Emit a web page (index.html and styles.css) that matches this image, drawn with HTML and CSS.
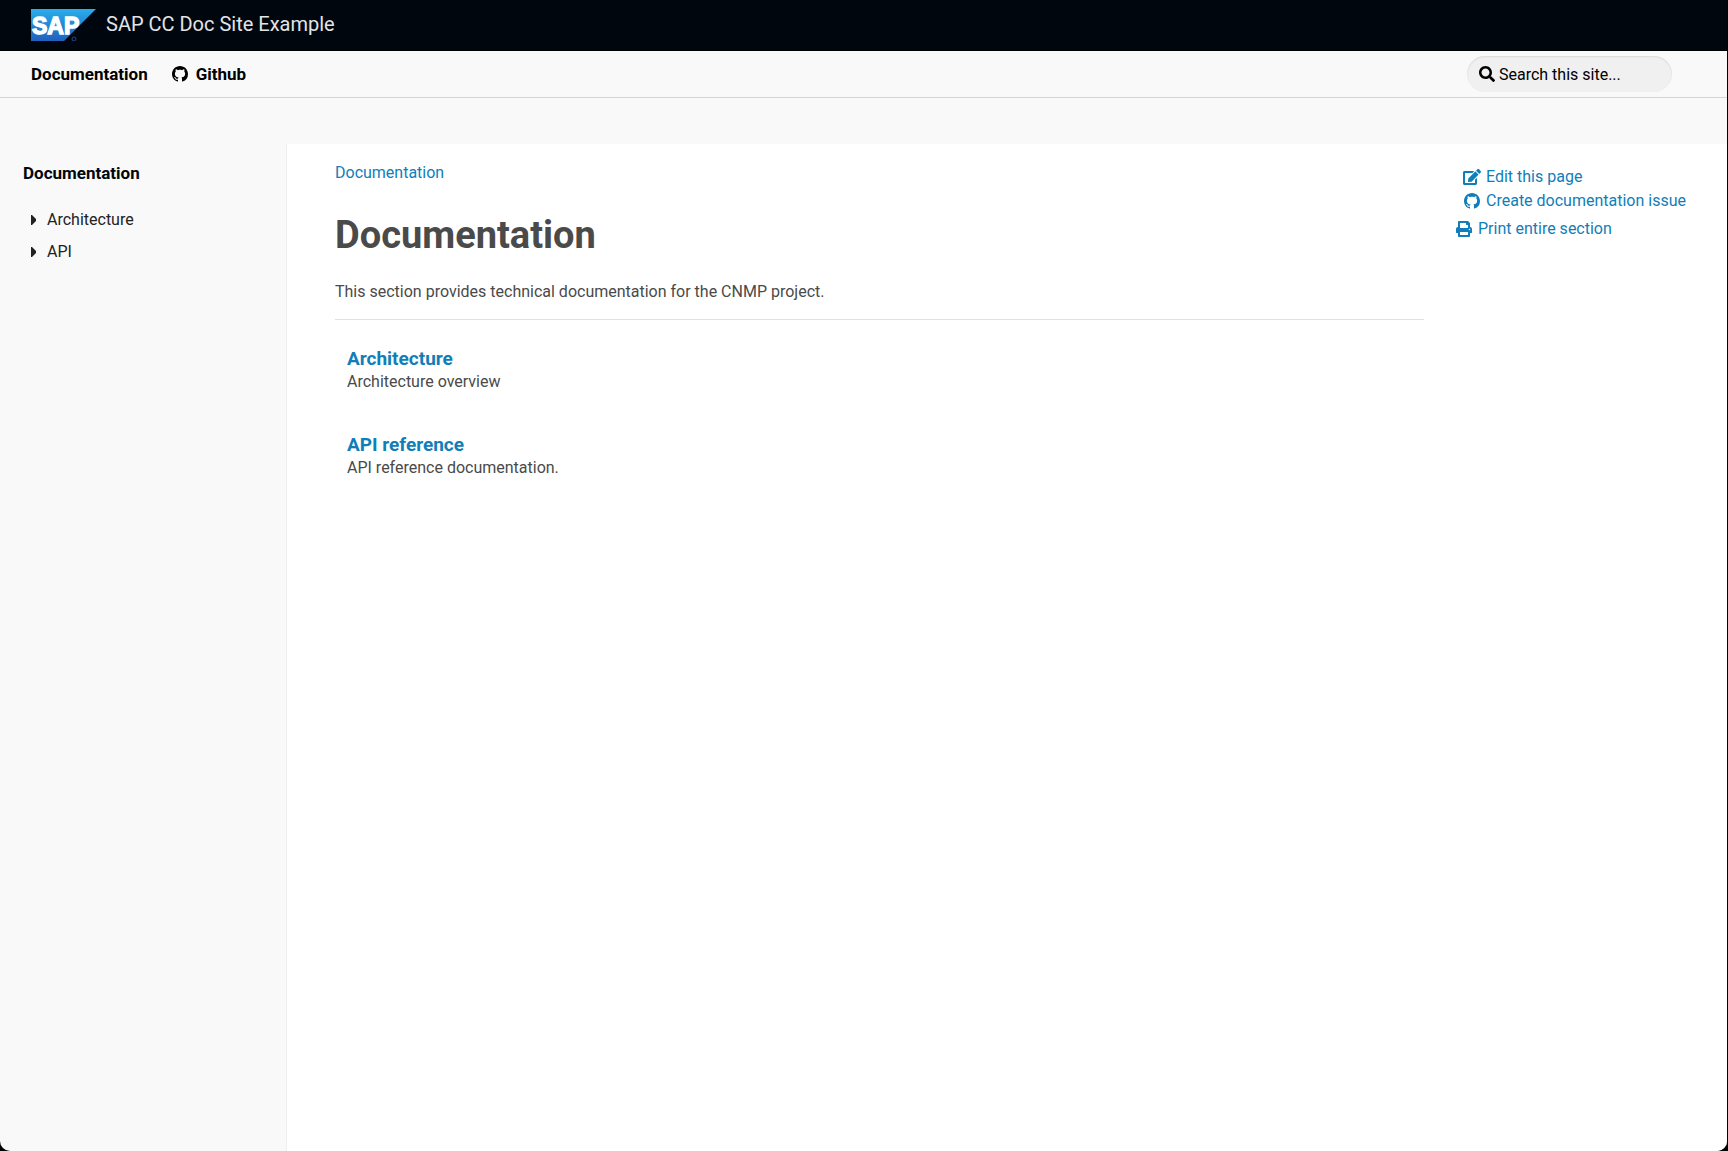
FILE: index.html
```html
<!DOCTYPE html>
<html lang="en">
<head>
<meta charset="utf-8">
<meta name="viewport" content="width=device-width, initial-scale=1">
<title>Documentation | SAP CC Doc Site Example</title>
<link rel="stylesheet" href="styles.css">
</head>
<body>
<svg class="sprite" aria-hidden="true">
  <symbol id="github" viewBox="0 0 16 16"><path d="M8 0C3.58 0 0 3.58 0 8c0 3.54 2.29 6.53 5.47 7.59.4.07.55-.17.55-.38 0-.19-.01-.82-.01-1.49-2.01.37-2.53-.49-2.69-.94-.09-.23-.48-.94-.82-1.13-.28-.15-.68-.52-.01-.53.63-.01 1.08.58 1.23.82.72 1.21 1.87.87 2.33.66.07-.52.28-.87.51-1.07-1.78-.2-3.64-.89-3.64-3.95 0-.87.31-1.59.82-2.15-.08-.2-.36-1.02.08-2.12 0 0 .67-.21 2.2.82.64-.18 1.32-.27 2-.27s1.36.09 2 .27c1.53-1.04 2.2-.82 2.2-.82.44 1.1.16 1.92.08 2.12.51.56.82 1.27.82 2.15 0 3.07-1.87 3.75-3.65 3.95.29.25.54.73.54 1.48 0 1.07-.01 1.93-.01 2.2 0 .21.15.46.55.38A8.01 8.01 0 0 0 16 8c0-4.42-3.58-8-8-8z"/></symbol>
</svg>
<div class="site">
  <header class="masthead">
    <a class="brand" href="#">
      <svg class="logo" viewBox="0 0 66 32" role="img" aria-label="SAP">
        <defs><linearGradient id="sky" x1="0" y1="0" x2="0" y2="1"><stop offset="0" stop-color="#2aaeec"/><stop offset="1" stop-color="#2060bd"/></linearGradient></defs>
        <path d="M0 0H65L33 32H0z" fill="url(#sky)"/>
        <text class="logo-text" x="1" y="25">SAP</text>
        <circle cx="43" cy="30" r="2" fill="none" stroke="#1c4a90"/>
      </svg>
      <span>SAP CC Doc Site Example</span>
    </a>
  </header>
  <nav class="topnav" aria-label="Main">
    <a href="#">Documentation</a>
    <a href="#"><svg class="icon"><use href="#github"/></svg>Github</a>
    <label class="search">
      <svg class="icon" viewBox="0 0 512 512" aria-hidden="true"><path d="M505 442.7L405.3 343c-4.5-4.5-10.6-7-17-7H372c27.6-35.3 44-79.7 44-128C416 93.1 322.9 0 208 0S0 93.1 0 208s93.1 208 208 208c48.3 0 92.7-16.4 128-44v16.3c0 6.4 2.5 12.5 7 17l99.7 99.7c9.4 9.4 24.6 9.4 33.9 0l28.3-28.3c9.4-9.4 9.4-24.6.1-34zM208 336c-70.7 0-128-57.2-128-128 0-70.7 57.2-128 128-128 70.7 0 128 57.2 128 128 0 70.7-57.2 128-128 128z"/></svg>
      <input type="search" placeholder="Search this site..." aria-label="Search this site">
    </label>
  </nav>
  <div class="columns">
    <nav class="sidebar" aria-label="Section">
      <a class="sidebar-title" href="#">Documentation</a>
      <ul class="tree">
        <li><a href="#"><svg class="caret" viewBox="0 0 5 10" aria-hidden="true"><path d="M0 0H1L5 4V6L1 10H0z"/></svg>Architecture</a></li>
        <li><a href="#"><svg class="caret" viewBox="0 0 5 10" aria-hidden="true"><path d="M0 0H1L5 4V6L1 10H0z"/></svg>API</a></li>
      </ul>
    </nav>
    <div class="page">
      <main class="content">
        <a class="crumb" href="#">Documentation</a>
        <h1>Documentation</h1>
        <p class="lead">This section provides technical documentation for the CNMP project.</p>
        <section class="entry"><h2><a href="#">Architecture</a></h2><p>Architecture overview</p></section>
        <section class="entry"><h2><a href="#">API reference</a></h2><p>API reference documentation.</p></section>
      </main>
      <aside class="meta">
        <div class="meta-group">
          <a href="#"><svg class="icon icon-wide" viewBox="0 0 576 512" aria-hidden="true"><path d="M402.6 83.2l90.2 90.2c3.8 3.8 3.8 10 0 13.8L274.4 405.6l-92.8 10.3c-12.4 1.4-22.9-9.1-21.5-21.5l10.3-92.8L388.8 83.2c3.8-3.8 10-3.8 13.8 0zm162-22.9l-48.8-48.8c-15.2-15.2-39.9-15.2-55.2 0l-35.4 35.4c-3.8 3.8-3.8 10 0 13.8l90.2 90.2c3.8 3.8 10 3.8 13.8 0l35.4-35.4c15.2-15.3 15.2-40 0-55.2zM384 346.2V448H64V128h229.8c3.2 0 6.2-1.3 8.5-3.5l40-40c7.6-7.6 2.2-20.5-8.5-20.5H48C21.5 64 0 85.5 0 112v352c0 26.5 21.5 48 48 48h352c26.5 0 48-21.5 48-48V306.2c0-10.7-12.9-16-20.5-8.5l-40 40c-2.2 2.3-3.5 5.3-3.5 8.5z"/></svg>Edit this page</a>
          <a href="#"><svg class="icon icon-wide"><use href="#github"/></svg>Create documentation issue</a>
        </div>
        <a href="#"><svg class="icon" viewBox="0 0 512 512" aria-hidden="true"><path d="M448 192V77.25c0-8.49-3.37-16.62-9.37-22.63L393.37 9.37c-6-6-14.14-9.37-22.63-9.37H96C78.33 0 64 14.33 64 32v160c-35.35 0-64 28.65-64 64v112c0 8.84 7.16 16 16 16h48v96c0 17.67 14.33 32 32 32h320c17.67 0 32-14.33 32-32v-96h48c8.84 0 16-7.16 16-16V256c0-35.35-28.65-64-64-64zm-64 256H128v-96h256v96zm0-224H128V64h192v48c0 8.84 7.16 16 16 16h48v96zm48 72c-13.25 0-24-10.75-24-24 0-13.26 10.75-24 24-24s24 10.74 24 24c0 13.25-10.75 24-24 24z"/></svg>Print entire section</a>
      </aside>
    </div>
  </div>
</div>
</body>
</html>
```
FILE: styles.css
```css
* { box-sizing: border-box; }
html { background: #000; }
body {
  margin: 0;
  font: 16px/24px Roboto, "Liberation Sans", sans-serif;
  color: #4a4a4a;
}
a { color: #107eb8; text-decoration: none; }
h1, h2, p, ul { margin: 0; padding: 0; }

.sprite { display: none; }
.icon { width: 16px; height: 16px; flex: none; fill: currentColor; }
.icon-wide { width: 18px; }

.site {
  display: flex;
  flex-direction: column;
  min-height: 100vh;
  margin-right: 1px;
  background: #f9f9f9;
  border-radius: 0 0 10px 10px;
  overflow: hidden;
}

.masthead { padding: 0 31px; background: #00060e; border-bottom: 1px solid #000; }
.brand { display: flex; align-items: center; gap: 9px; height: 50px; font-size: 20px; color: #e2e4e6; }
.brand span { padding-bottom: 2px; }
.logo { width: 66px; height: 32px; }
.logo-text { font: bold 23px "Liberation Sans", sans-serif; fill: #fff; stroke: #fff; stroke-width: 1.4px; }

.topnav {
  display: flex;
  align-items: center;
  gap: 24px;
  padding: 5px 55px 5px 31px;
  border-bottom: 1px solid #d5d5d5;
}
.topnav a { display: flex; align-items: center; gap: 8px; font-size: 17px; font-weight: 700; color: #000; }
.search {
  display: flex;
  align-items: center;
  gap: 4px;
  width: 205px;
  height: 36px;
  margin-left: auto;
  padding: 0 12px;
  border-radius: 18px;
  background: #f0f0f0;
  box-shadow: inset 0 1px 2px rgba(0, 0, 0, .1);
  color: #000;
}
.search input { flex: 1; min-width: 0; padding: 1px 0 0; border: 0; outline: 0; background: none; font: inherit; color: inherit; }
.search input::placeholder { color: #000; opacity: 1; }

.columns { display: flex; flex: 1; padding-top: 46px; }
.sidebar { width: 287px; flex: none; padding: 17px 23px; border-right: 1px solid #eee; }
.sidebar-title { font-size: 17px; font-weight: 700; color: #00060e; }
.tree { margin-top: 18px; list-style: none; }
.tree a { display: flex; align-items: center; gap: 11px; height: 32px; padding-left: 8px; color: #222; }
.caret { width: 5px; height: 10px; fill: currentColor; }

.page { display: flex; flex: 1; background: #fff; }
.content { flex: 1; padding: 17px 0 48px 48px; }
.crumb { display: block; }
h1 { margin-top: 26px; font-size: 38px; line-height: 48px; font-weight: 700; }
.lead { margin-top: 21px; padding-bottom: 15px; border-bottom: 1px solid #e1e1e1; }
.entry { padding: 28px 12px 12px; }
.entry h2 { font-size: 19px; line-height: 22px; }
.entry p { line-height: 24px; }

.meta { width: 303px; flex: none; display: flex; flex-direction: column; gap: 4px; padding: 21px 0 0 32px; }
.meta-group { padding-left: 7px; }
.meta a { display: flex; align-items: center; gap: 6px; }
.meta-group a { gap: 5px; }
```
